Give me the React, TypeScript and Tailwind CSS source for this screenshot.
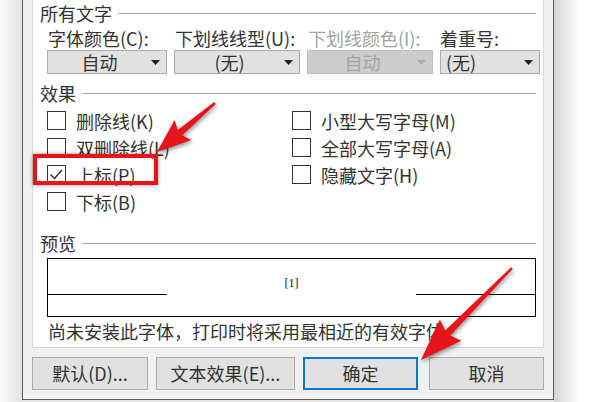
import React from "react";

type Pt = [number, number];

// build a tapered annotation arrow polygon from tail to tip
const arrowPoints = (tail: Pt, tip: Pt, headLen: number, headHalf: number) => {
  const dx = tip[0] - tail[0];
  const dy = tip[1] - tail[1];
  const len = Math.hypot(dx, dy);
  const ux = dx / len;
  const uy = dy / len;
  const nx = -uy;
  const ny = ux;
  const bx = tip[0] - ux * headLen;
  const by = tip[1] - uy * headLen;
  const p = (x: number, y: number) => `${x.toFixed(1)},${y.toFixed(1)}`;
  return [
    p(tail[0] + nx * 1.2, tail[1] + ny * 1.2),
    p(bx + nx * 3.5, by + ny * 3.5),
    p(bx - ux * 4 + nx * headHalf, by - uy * 4 + ny * headHalf),
    p(tip[0], tip[1]),
    p(bx - ux * 4 - nx * headHalf, by - uy * 4 - ny * headHalf),
    p(bx - nx * 3.5, by - ny * 3.5),
    p(tail[0] - nx * 1.2, tail[1] - ny * 1.2),
  ].join(" ");
};

const Caret = ({ disabled }: { disabled?: boolean }) => (
  <svg width="9" height="5" viewBox="0 0 9 5">
    <path d="M0 0 H9 L4.5 5 Z" fill={disabled ? "#ababab" : "#222"} />
  </svg>
);

const Heading = ({ text }: { text: string }) => (
  <div className="flex items-center h-[20px]">
    <span className="leading-[20px]">{text}</span>
    <div className="flex-1 h-px bg-[#a8a8a8] ml-[6px]" />
  </div>
);

const Select = ({
  value,
  width,
  disabled,
  left,
}: {
  value: string;
  width: string;
  disabled?: boolean;
  left?: boolean;
}) => (
  <div
    className={`${width} h-[24px] border flex items-center pr-[6px] ${
      disabled
        ? "bg-[#cccccc] border-[#bfbfbf] text-[#a3a3a3]"
        : "bg-[#e1e1e1] border-[#adadad] text-[#333]"
    }`}
  >
    <span className={`flex-1 leading-[22px] ${left ? "pl-[5px]" : "text-center"}`}>{value}</span>
    <Caret disabled={disabled} />
  </div>
);

const Check = ({ label, checked }: { label: string; checked?: boolean }) => (
  <div className="flex items-center h-[27px]">
    <div className="w-[19px] h-[19px] border border-[#333] bg-white flex items-center justify-center">
      {checked && (
        <svg width="17" height="17" viewBox="0 0 17 17">
          <path d="M2.5 8.5 L6.5 12.5 L14 4" fill="none" stroke="#333" strokeWidth="1.5" />
        </svg>
      )}
    </div>
    <span className="ml-[10px] leading-[20px]">{label}</span>
  </div>
);

const Button = ({ text, width, primary }: { text: string; width: string; primary?: boolean }) => (
  <div
    className={`${width} h-[33px] bg-[#e1e1e1] flex items-center justify-center ${
      primary ? "border-2 border-[#0a78cf]" : "border border-[#adadad]"
    }`}
  >
    {text}
  </div>
);

export default function App() {
  return (
    <div className="relative w-[602px] h-[402px] overflow-hidden flex bg-[#e6e6e6] text-[18px] text-[#333] font-['Noto_Sans_CJK_SC',sans-serif]">
      <div className="w-[22px] h-full bg-[linear-gradient(to_right,#fbfbfb,#e3e3e3)]" />

      <div className="w-[532px] h-[400px] border-l border-r border-b border-[#5e5e5e] bg-[#f0f0f0] px-[9px] flex flex-col">
        <div className="h-[348px] bg-white border border-t-0 border-[#d6d6d6] px-[7px] flex flex-col">
          <div className="mt-[3px]">
            <Heading text="所有文字" />
          </div>

          <div className="ml-[7px] mt-[5px] flex gap-[7px]">
            <div className="flex flex-col gap-[2px]">
              <span className="h-[20px] leading-[20px] whitespace-nowrap pl-[1px]">字体颜色(C):</span>
              <Select value="自动" width="w-[120px]" />
            </div>
            <div className="flex flex-col gap-[2px]">
              <span className="h-[20px] leading-[20px] whitespace-nowrap pl-[1px]">下划线线型(U):</span>
              <Select value="(无)" width="w-[126px]" />
            </div>
            <div className="flex flex-col gap-[2px]">
              <span className="h-[20px] leading-[20px] whitespace-nowrap pl-[1px] text-[#a3a3a3]">下划线颜色(I):</span>
              <Select value="自动" width="w-[126px]" disabled />
            </div>
            <div className="flex flex-col gap-[2px]">
              <span className="h-[20px] leading-[20px] whitespace-nowrap">着重号:</span>
              <Select value="(无)" width="w-[100px]" left />
            </div>
          </div>

          <div className="mt-[9px]">
            <Heading text="效果" />
          </div>

          <div className="ml-[7px] mt-[4px] flex">
            <div className="w-[245px] flex flex-col">
              <Check label="删除线(K)" />
              <Check label="双删除线(L)" />
              <Check label="上标(P)" checked />
              <Check label="下标(B)" />
            </div>
            <div className="flex flex-col">
              <Check label="小型大写字母(M)" />
              <Check label="全部大写字母(A)" />
              <Check label="隐藏文字(H)" />
            </div>
          </div>

          <div className="mt-[18px]">
            <Heading text="预览" />
          </div>

          <div className="ml-[7px] mt-[5px] h-[59px] border border-black flex flex-col">
            <div className="h-[35px] flex items-end justify-center pb-[3px] text-[12px] leading-[16px] text-[#111] font-['Liberation_Serif',serif]">
              [1]
            </div>
            <div className="flex">
              <div className="w-[119px] h-px bg-black" />
              <div className="flex-1" />
              <div className="w-[119px] h-px bg-black" />
            </div>
          </div>

          <div className="ml-[8px] mt-[4px] h-[20px] leading-[20px] whitespace-nowrap">
            尚未安装此字体，打印时将采用最相近的有效字体
          </div>
        </div>

        <div className="mt-[9px] flex">
          <Button text="默认(D)..." width="w-[116px]" />
          <div className="w-[8px]" />
          <Button text="文本效果(E)..." width="w-[139px]" />
          <div className="w-[8px]" />
          <Button text="确定" width="w-[115px]" primary />
          <div className="w-[11px]" />
          <Button text="取消" width="w-[115px]" />
        </div>
      </div>

      <div className="flex-1 h-full bg-[linear-gradient(to_right,#d4d4d4,#ffffff_26px)]" />

      {/* annotation overlay */}
      <div className="absolute left-[33px] top-[154px] w-[125px] h-[31px] border-4 border-[#e8141b] shadow-[0_0_4px_rgba(0,0,0,0.45)]" />
      <svg className="absolute left-0 top-0 drop-shadow-[1px_2px_2px_rgba(0,0,0,0.45)]" width="602" height="402">
        <polygon points={arrowPoints([215, 103], [157, 152], 30, 13)} fill="#e8141b" />
        <polygon points={arrowPoints([512, 268], [421, 360], 38, 15)} fill="#e8141b" />
      </svg>
    </div>
  );
}
